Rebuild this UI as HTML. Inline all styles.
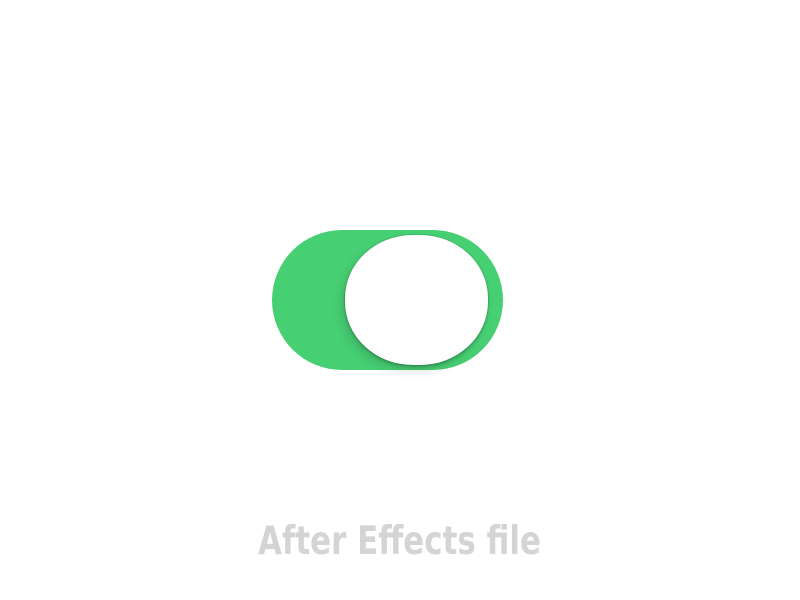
<!DOCTYPE html>
<html><head><style>
html,body{margin:0;padding:0;background:#fff;width:800px;height:600px;overflow:hidden;position:relative}
.track{position:absolute;left:272px;top:230px;width:231px;height:140px;border-radius:70px;background:#47cf73}
.knob{position:absolute;left:345px;top:235px;width:143px;height:130px;border-radius:68px/63px;background:#fff;
box-shadow:0 0 0 1px rgba(0,0,0,0.08),0 2px 3px rgba(0,0,0,0.2),-4px 6px 10px rgba(0,0,0,0.12)}
svg{position:absolute;left:0;top:0}
</style></head><body>
<div class="track"></div>
<div class="knob"></div>
<svg width="800" height="600"><text x="258" y="554" textLength="283" lengthAdjust="spacingAndGlyphs" font-family="DejaVu Sans, sans-serif" font-weight="bold" font-size="39" fill="#d4d4d4">After Effects file</text></svg>
</body></html>
